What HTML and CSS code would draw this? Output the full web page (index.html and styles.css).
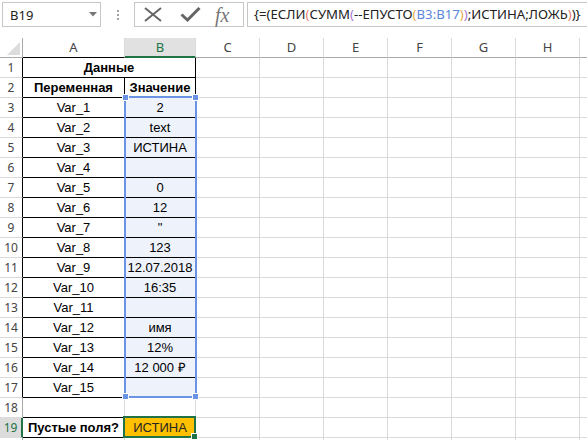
FILE: index.html
```html
<!DOCTYPE html>
<html lang="ru">
<head>
    <meta charset="UTF-8">
    <title>Пустые поля</title>
    <link rel="stylesheet" href="styles.css">
</head>
<body>
    <div class="toolbar">
        <div class="namebox">
            <span>B19</span>
            <svg class="arrow" width="8" height="5" viewBox="0 0 8 5"><path d="M0 0H8L4 4.5Z" fill="#777"/></svg>
        </div>
        <div class="grip"><i></i><i></i><i></i></div>
        <div class="fxbox">
            <svg class="ico-x" width="18" height="15" viewBox="0 0 18 15">
                <path d="M1 1L17 14M17 1L1 14" stroke="#666" stroke-width="2" fill="none"/>
            </svg>
            <svg class="ico-ok" width="21" height="15" viewBox="0 0 21 15">
                <path d="M1.5 7.5L7.5 13L19.5 1" stroke="#666" stroke-width="3" fill="none"/>
            </svg>
            <span class="fx">fx</span>
        </div>
        <div class="formula">{=(ЕСЛИ<span class="p1">(</span>СУММ<span class="p2">(</span>--ЕПУСТО<span class="p3">(</span><span class="ref">B3:B17</span><span class="p3">)</span><span class="p2">)</span>;ИСТИНА;ЛОЖЬ<span class="p1">)</span>)}</div>
    </div>

    <div class="sheet">
        <div class="row head">
            <div class="corner"><svg width="13" height="13" viewBox="0 0 13 13"><path d="M13 0V13H0Z" fill="#dcdcdc"/></svg></div>
            <div class="tb">A</div><div class="on">B</div><div>C</div><div>D</div><div>E</div><div>F</div><div>G</div><div>H</div><div></div>
        </div>
        <div class="row">
            <div class="rh tb">1</div><div class="t b wide">Данные</div>
            <div></div><div></div><div></div><div></div><div></div><div></div><div></div>
        </div>
        <div class="row">
            <div class="rh tb">2</div><div class="t b">Переменная</div><div class="t b">Значение</div>
            <div></div><div></div><div></div><div></div><div></div><div></div><div></div>
        </div>
        <div class="row">
            <div class="rh tb">3</div><div class="t">Var_1</div><div class="t s">2</div>
            <div></div><div></div><div></div><div></div><div></div><div></div><div></div>
        </div>
        <div class="row">
            <div class="rh tb">4</div><div class="t">Var_2</div><div class="t s">text</div>
            <div></div><div></div><div></div><div></div><div></div><div></div><div></div>
        </div>
        <div class="row">
            <div class="rh tb">5</div><div class="t">Var_3</div><div class="t s">ИСТИНА</div>
            <div></div><div></div><div></div><div></div><div></div><div></div><div></div>
        </div>
        <div class="row">
            <div class="rh tb">6</div><div class="t">Var_4</div><div class="t s"></div>
            <div></div><div></div><div></div><div></div><div></div><div></div><div></div>
        </div>
        <div class="row">
            <div class="rh tb">7</div><div class="t">Var_5</div><div class="t s">0</div>
            <div></div><div></div><div></div><div></div><div></div><div></div><div></div>
        </div>
        <div class="row">
            <div class="rh tb">8</div><div class="t">Var_6</div><div class="t s">12</div>
            <div></div><div></div><div></div><div></div><div></div><div></div><div></div>
        </div>
        <div class="row">
            <div class="rh tb">9</div><div class="t">Var_7</div><div class="t s">"</div>
            <div></div><div></div><div></div><div></div><div></div><div></div><div></div>
        </div>
        <div class="row">
            <div class="rh tb">10</div><div class="t">Var_8</div><div class="t s">123</div>
            <div></div><div></div><div></div><div></div><div></div><div></div><div></div>
        </div>
        <div class="row">
            <div class="rh tb">11</div><div class="t">Var_9</div><div class="t s">12.07.2018</div>
            <div></div><div></div><div></div><div></div><div></div><div></div><div></div>
        </div>
        <div class="row">
            <div class="rh tb">12</div><div class="t">Var_10</div><div class="t s">16:35</div>
            <div></div><div></div><div></div><div></div><div></div><div></div><div></div>
        </div>
        <div class="row">
            <div class="rh tb">13</div><div class="t">Var_11</div><div class="t s"></div>
            <div></div><div></div><div></div><div></div><div></div><div></div><div></div>
        </div>
        <div class="row">
            <div class="rh tb">14</div><div class="t">Var_12</div><div class="t s">имя</div>
            <div></div><div></div><div></div><div></div><div></div><div></div><div></div>
        </div>
        <div class="row">
            <div class="rh tb">15</div><div class="t">Var_13</div><div class="t s">12%</div>
            <div></div><div></div><div></div><div></div><div></div><div></div><div></div>
        </div>
        <div class="row">
            <div class="rh tb">16</div><div class="t">Var_14</div><div class="t s">12 000 ₽</div>
            <div></div><div></div><div></div><div></div><div></div><div></div><div></div>
        </div>
        <div class="row">
            <div class="rh tb">17</div><div class="t">Var_15</div><div class="t s"></div>
            <div></div><div></div><div></div><div></div><div></div><div></div><div></div>
        </div>
        <div class="row">
            <div class="rh">18</div><div class="fb"></div><div></div>
            <div></div><div></div><div></div><div></div><div></div><div></div><div></div>
        </div>
        <div class="row">
            <div class="rh on">19</div><div class="t b">Пустые поля?</div><div class="active">ИСТИНА</div>
            <div></div><div></div><div></div><div></div><div></div><div></div><div></div>
        </div>
        <div class="row">
            <div class="rh"></div><div></div><div></div>
            <div></div><div></div><div></div><div></div><div></div><div></div><div></div>
        </div>

        <!-- selected range B3:B17 -->
        <div class="range">
            <span class="h tl"></span><span class="h tr"></span>
            <span class="h bl"></span><span class="h br"></span>
        </div>
    </div>
</body>
</html>
```

FILE: styles.css
```css
body {
    margin: 0;
    background: #fff;
    font-family: "Liberation Sans", Arial, sans-serif;
    overflow: hidden;
    height: 440px;
}

/* formula bar */
.toolbar {
    display: flex;
    align-items: flex-start;
    height: 38px;
    padding: 2px 0 0 2px;
    box-sizing: border-box;
}
.namebox {
    width: 99px;
    height: 25px;
    border: 1px solid #c6c6c6;
    box-sizing: border-box;
    display: flex;
    align-items: center;
    justify-content: space-between;
    padding: 0 3px 0 7px;
    font: 13px "Noto Sans", sans-serif;
    color: #222;
}
.grip {
    width: 33px;
    height: 25px;
    display: flex;
    flex-direction: column;
    align-items: center;
    justify-content: center;
    gap: 2px;
}
.grip i {
    width: 2px;
    height: 2px;
    background: #a0a0a0;
}
.fxbox {
    width: 110px;
    height: 25px;
    border: 1px solid #c6c6c6;
    box-sizing: border-box;
    display: flex;
    align-items: center;
    padding-left: 9px;
}
.ico-ok {
    margin-left: 18px;
}
.fx {
    margin-left: 14px;
    font: italic 20px "Liberation Serif", serif;
    color: #777;
    line-height: 20px;
}
.formula {
    flex: 1;
    margin-left: 3px;
    height: 25px;
    border: 1px solid #c6c6c6;
    border-right: none;
    box-sizing: border-box;
    padding-left: 6px;
    font: 13.2px "Noto Sans", sans-serif;
    line-height: 23px;
    color: #222;
    white-space: nowrap;
    overflow: hidden;
}
.p1 { color: #e8806e; }
.p2 { color: #a97bd0; }
.p3 { color: #e2ad47; }
.ref { color: #5b87da; }

/* grid */
.sheet {
    position: relative;
}
.row {
    display: grid;
    grid-template-columns: 23px 102px 71px repeat(7, 64px);
    height: 20px;
}
.row > div {
    box-sizing: border-box;
    border-right: 1px solid #dadada;
    border-bottom: 1px solid #dadada;
    font-size: 13px;
    line-height: 19px;
    text-align: center;
    white-space: nowrap;
    overflow: hidden;
    color: #000;
}
.head > div {
    font: 13px "Noto Sans", sans-serif;
    line-height: 19px;
    color: #444;
    border-bottom-color: #ababab;
}
.head .corner {
    display: flex;
    align-items: flex-end;
    justify-content: flex-end;
    padding: 0 2px 2px 0;
    border-right-color: #ababab;
}
.head .tb {
    border-bottom-color: #000;
}
.head .on {
    background: #e1e1e1;
    color: #217346;
    border-bottom: 2px solid #217346;
}

.row > .rh {
    font: 12px "Noto Sans", sans-serif;
    line-height: 19px;
    color: #444;
    border-right-color: #ababab;
}
.row > .rh.tb {
    border-right-color: #000;
}
.row > .rh.on {
    background: #dcdcdc;
    color: #217346;
    border-right: 2px solid #217346;
}

.row > .t {
    border-right-color: #000;
    border-bottom-color: #000;
}
.row > .fb {
    border-bottom-color: #000;
}
.row > .b {
    font-weight: bold;
}
.row > .wide {
    grid-column: span 2;
}
.row > .s {
    background: #eef2fb;
}
.row > .active {
    position: relative;
    overflow: visible;
    background: #ffc000;
    color: #262626;
}
.active::before {
    content: "";
    position: absolute;
    top: -2px;
    left: -2px;
    right: -1px;
    bottom: -1px;
    border: 2px solid #217346;
    z-index: 2;
}
.active::after {
    content: "";
    position: absolute;
    right: -3px;
    bottom: -3px;
    width: 5px;
    height: 5px;
    background: #217346;
    border: 1px solid #fff;
    z-index: 3;
}

/* selected range overlay */
.range {
    position: absolute;
    left: 124px;
    top: 58px;
    width: 73px;
    height: 302px;
    box-sizing: border-box;
    border: 2px solid #6b93e3;
    z-index: 1;
}
.range .h {
    position: absolute;
    width: 5px;
    height: 5px;
    background: #6b93e3;
    border: 1px solid #fff;
}
.range .tl { left: -4px; top: -4px; }
.range .tr { right: -4px; top: -4px; }
.range .bl { left: -4px; bottom: -4px; }
.range .br { right: -4px; bottom: -4px; }
```
